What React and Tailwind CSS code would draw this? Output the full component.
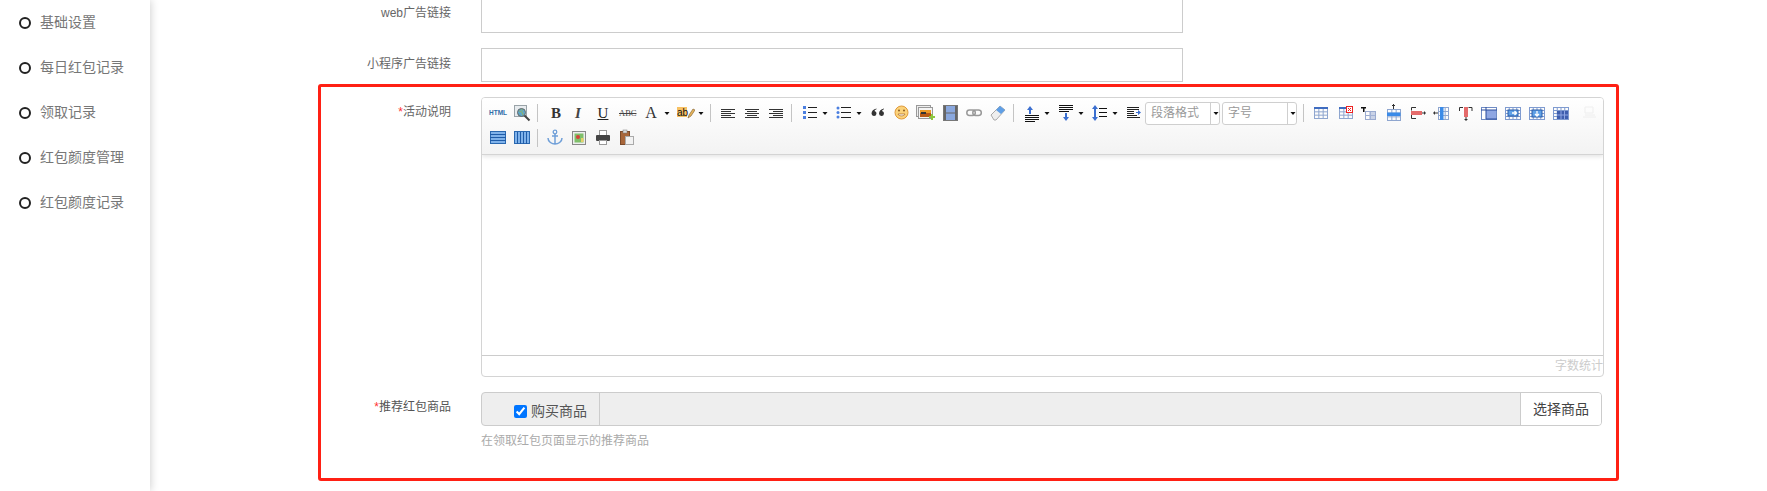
const FONT = "font-['Liberation_Sans','Noto_Sans_CJK_SC',sans-serif]";

function Ic({ w = 16, className = "", children }) {
  return (
    <svg width={w} height={18} viewBox={`0 0 ${w} 18`} className={"shrink-0 " + className}>
      {children}
    </svg>
  );
}

function Sep({ className = "" }) {
  return <div className={"w-px h-[18px] bg-[#c4c4c4] shrink-0 " + className} />;
}

function Caret({ className = "" }) {
  return (
    <svg width={6} height={18} viewBox="0 0 6 18" className={"shrink-0 " + className}>
      <path d="M0.5 8h5L3 11z" fill="#111" />
    </svg>
  );
}

function Lines({ x = 0, ys, ws, c = "#333" }) {
  return ys.map((y, i) => <rect key={i} x={x} y={y} width={ws[i % ws.length]} height={1} fill={c} />);
}

function Grid({ x, y, w, h, nx, ny, c = "#7f9bd0" }) {
  const v = [];
  for (let i = 1; i < nx; i++) v.push(<line key={"v" + i} x1={x + (w * i) / nx + 0.5} x2={x + (w * i) / nx + 0.5} y1={y} y2={y + h} stroke={c} />);
  for (let i = 1; i < ny; i++) v.push(<line key={"h" + i} y1={y + (h * i) / ny + 0.5} y2={y + (h * i) / ny + 0.5} x1={x} x2={x + w} stroke={c} />);
  return (
    <g>
      {v}
      <rect x={x + 0.5} y={y + 0.5} width={w} height={h} fill="none" stroke={c} />
    </g>
  );
}

function SelectBox({ label, className = "", w, line }) {
  return (
    <div className={"flex items-center h-[23px] border border-[#cfcfcf] rounded-[3px] bg-white shrink-0 " + w + " " + className}>
      <span className={"pl-[5px] text-[12px] text-[#999] " + line}>{label}</span>
      <div className="w-px h-full bg-[#cfcfcf]" />
      <Caret className="ml-[2px]" />
    </div>
  );
}

function Row1() {
  return (
    <div className="flex items-center h-[18px] pl-[7px]">
      <span className="w-[18px] text-[6.5px] leading-[18px] font-bold text-[#2f6ca8] shrink-0 font-['Liberation_Sans',sans-serif]">HTML</span>
      <Ic w={17} className="ml-[7px]">
        <rect x="0.5" y="1.5" width="12" height="11" fill="#e8ecef" stroke="#9aa3a8" />
        <circle cx="7.5" cy="8.5" r="4" fill="#5fa6c6" stroke="#666" />
        <path d="M5 7l3 1 1 3M7 5.5l2 1" stroke="#8db36a" fill="none" />
        <path d="M10.5 11.5l5 5" stroke="#444" strokeWidth="2" />
      </Ic>
      <Sep className="ml-[6px]" />
      <span className="w-[14px] ml-[11px] text-center text-[15px] leading-[18px] font-bold text-[#333] font-['Liberation_Serif',serif] shrink-0">B</span>
      <span className="w-[14px] ml-[8px] text-center text-[15px] leading-[18px] font-bold italic text-[#444] font-['Liberation_Serif',serif] shrink-0">I</span>
      <span className="w-[14px] ml-[11px] text-center text-[15px] leading-[18px] underline text-[#222] font-['Liberation_Serif',serif] shrink-0">U</span>
      <span className="w-[16px] ml-[9px] text-center text-[8.5px] leading-[18px] line-through text-[#444] font-['Liberation_Serif',serif] shrink-0">ABC</span>
      <span className="w-[14px] ml-[9px] text-center text-[16px] leading-[18px] text-[#333] font-['Liberation_Serif',serif] shrink-0">A</span>
      <Caret className="ml-[6px]" />
      <Ic w={18} className="ml-[7px]">
        <rect x="0" y="3" width="10" height="10" fill="#f7c163" />
        <text x="0" y="11.5" fontSize="10" fontFamily="Liberation Sans" fill="#111">ab</text>
        <path d="M11 14l1-3 4-6 2 1-4 6z" fill="#e6b45a" stroke="#8a6a3a" strokeWidth="0.7" />
      </Ic>
      <Caret className="ml-[3px]" />
      <Sep className="ml-[6px]" />
      <Ic w={15} className="ml-[10px]"><Lines ys={[5, 7, 9, 11, 13]} ws={[14, 10]} /></Ic>
      <Ic w={15} className="ml-[9px]"><Lines x={0} ys={[5, 9, 13]} ws={[14]} /><Lines x={2} ys={[7, 11]} ws={[10]} /></Ic>
      <Ic w={15} className="ml-[9px]"><Lines x={0} ys={[5, 9, 13]} ws={[14]} /><Lines x={4} ys={[7, 11]} ws={[10]} /></Ic>
      <Sep className="ml-[7px]" />
      <Ic w={15} className="ml-[10px]">
        <rect x="1" y="2" width="3" height="3" fill="#4b7fe0" /><rect x="1" y="7" width="3" height="3" fill="#4b7fe0" /><rect x="1" y="12" width="3" height="3" fill="#4b7fe0" />
        <Lines x={6} ys={[3, 8, 13]} ws={[9]} c="#222" />
      </Ic>
      <Caret className="ml-[5px]" />
      <Ic w={15} className="ml-[8px]">
        <circle cx="2" cy="4" r="1.5" fill="#4b7fe0" /><circle cx="2" cy="8.5" r="1.5" fill="#4b7fe0" /><circle cx="2" cy="13" r="1.5" fill="#4b7fe0" />
        <Lines x={5} ys={[3, 8, 13]} ws={[10]} c="#222" />
      </Ic>
      <Caret className="ml-[5px]" />
      <Ic w={15} className="ml-[8px]">
        <path d="M6.5 4.500c-3 .5-5 2.500-5 5a2.500 2.500 0 1 0 3-2.500c.2-1 1-1.500 2-1.800zM14 4.500c-3 .5-5 2.500-5 5a2.500 2.500 0 1 0 3-2.500c.2-1 1-1.500 2-1.800z" fill="#333" />
      </Ic>
      <Ic w={15} className="ml-[9px]">
        <circle cx="7.500" cy="8.500" r="6.500" fill="#fbd27a" stroke="#e09a3a" />
        <circle cx="5" cy="6.500" r="1" fill="#8a5a20" /><circle cx="10" cy="6.500" r="1" fill="#8a5a20" />
        <path d="M4 10h7c-.5 2.500-6.500 2.500-7 0z" fill="#fff" stroke="#a8641e" strokeWidth="0.7" />
      </Ic>
      <Ic w={19} className="ml-[7px]">
        <rect x="0.500" y="1.500" width="14" height="11" fill="#eee" stroke="#999" />
        <rect x="2.500" y="3.500" width="14" height="11" fill="#f4f4f4" stroke="#999" />
        <rect x="4" y="6" width="11" height="7" fill="#b85a14" />
        <rect x="4" y="6" width="11" height="3" fill="#ea9a28" />
        <rect x="5" y="8" width="5" height="2" fill="#333" />
        <path d="M15 10h2v2h2v2h-2v2h-2v-2h-2v-2h2z" fill="#8cc63f" />
      </Ic>
      <Ic w={15} className="ml-[8px]">
        <rect x="0.500" y="1.500" width="14" height="15" fill="#666" stroke="#777" />
        <rect x="3" y="2" width="9" height="6.500" fill="#8aa8de" />
        <rect x="3" y="9.500" width="9" height="6.500" fill="#8aa8de" />
      </Ic>
      <Ic w={16} className="ml-[8px]">
        <rect x="0.800" y="6" width="8.500" height="5.500" rx="2.700" fill="none" stroke="#999" strokeWidth="1.500" />
        <rect x="6.800" y="6" width="8.500" height="5.500" rx="2.700" fill="none" stroke="#999" strokeWidth="1.500" />
      </Ic>
      <Ic w={16} className="ml-[8px]">
        <path d="M1 11l9-9 5 4-9 10H4z" fill="#eee" stroke="#aaa" />
        <path d="M6 6l5 4 4-4-5-4z" fill="#5f9fe6" />
      </Ic>
      <Sep className="ml-[7px]" />
      <Ic w={15} className="ml-[11px]">
        <path d="M5 1l3 4H6v4H4V5H2z" transform="translate(0 1)" fill="#3b6fd0" />
        <Lines ys={[11, 13, 15, 17]} ws={[14, 14, 14, 10]} c="#111" />
      </Ic>
      <Caret className="ml-[4px]" />
      <Ic w={15} className="ml-[9px]">
        <Lines ys={[1, 3, 5, 7]} ws={[14, 14, 14, 10]} c="#111" />
        <path d="M6 9h2v4h2l-3 4-3-4h2z" fill="#3b6fd0" />
      </Ic>
      <Caret className="ml-[4px]" />
      <Ic w={15} className="ml-[8px]">
        <path d="M3 1l3 4H4v8h2l-3 4-3-4h2V5H0z" fill="#3b6fd0" />
        <Lines x={7} ys={[4, 8, 12]} ws={[8]} c="#111" />
      </Ic>
      <Caret className="ml-[5px]" />
      <Ic w={14} className="ml-[9px]">
        <Lines ys={[3, 5, 11, 13]} ws={[12, 12, 10, 13]} c="#222" />
        <Lines ys={[7, 9]} ws={[7]} c="#222" />
        <path d="M9 8h2V6l3 2.500-3 2.500V9H9z" fill="#3b6fd0" />
      </Ic>
      <SelectBox label="段落格式" w="w-[75px]" line="w-[65px]" className="ml-[4px]" />
      <SelectBox label="字号" w="w-[75px]" line="w-[65px]" className="ml-[2px]" />
      <Sep className="ml-[6px]" />
      <Ic w={14} className="ml-[10px]">
        <Grid x={0} y={4} w={13} h={10} nx={3} ny={3} c="#8fa6cf" />
        <rect x="0" y="3" width="14" height="2" fill="#3f6cc0" />
      </Ic>
      <Ic w={14} className="ml-[11px]">
        <Grid x={0} y={4} w={13} h={10} nx={3} ny={3} c="#8fa6cf" />
        <rect x="0" y="3" width="8" height="2" fill="#3f6cc0" />
        <rect x="7.500" y="2.500" width="6" height="6" fill="#fff" stroke="#e22" />
        <path d="M9 4l3 3M12 4l-3 3" stroke="#e22" />
      </Ic>
      <Ic w={15} className="ml-[8px]">
        <path d="M0 3h5v1.500H3.500V8H2V4.500H0z" fill="#111" />
        <Grid x={4} y={7} w={10} h={8} nx={2} ny={2} c="#9aabd0" />
        <rect x="8" y="8" width="6" height="7" fill="#a9b7d9" opacity=".6" />
      </Ic>
      <Ic w={14} className="ml-[11px]">
        <Grid x={0} y={5} w={13} h={11} nx={3} ny={3} c="#8fa6cf" />
        <rect x="0" y="8.500" width="13.500" height="3.500" fill="#3b8be8" />
        <path d="M6.500 0v5M5 1.500h3" stroke="#333" />
      </Ic>
      <Ic w={15} className="ml-[10px]">
        <path d="M5 3.500H0.500v3M0.500 11v3.500H5" fill="none" stroke="#333" />
        <rect x="0" y="7" width="11" height="4" fill="#e46a6a" />
        <path d="M11 9h4M13.500 7.500v3" stroke="#333" />
      </Ic>
      <Ic w={16} className="ml-[7px]">
        <Grid x={5} y={3} w={10} h={12} nx={3} ny={3} c="#8fa6cf" />
        <rect x="7" y="3" width="3.500" height="13" fill="#3b8be8" />
        <path d="M0 9h5M1.500 7.500v3" stroke="#333" />
      </Ic>
      <Ic w={14} className="ml-[10px]">
        <path d="M0.500 7V3.500h3.500M9.500 3.500H13V7" fill="none" stroke="#333" />
        <rect x="5" y="3" width="4" height="10" fill="#e46a6a" />
        <path d="M7 13v4M5.500 15.500h3" stroke="#333" />
      </Ic>
      <Ic w={16} className="ml-[8px]">
        <rect x="0.500" y="3.500" width="15" height="12" fill="#fff" stroke="#6f8bc4" />
        <rect x="5" y="6" width="10" height="9" fill="#8ea6e2" />
        <path d="M5 3v12h11M0 6h16" stroke="#2a4c9c" fill="none" />
      </Ic>
      <Ic w={16} className="ml-[8px]">
        <Grid x={0} y={3} w={15} h={12} nx={4} ny={4} c="#7f9bd0" />
        <rect x="3" y="6" width="10" height="6" fill="#5fa0e6" stroke="#2a5ca8" />
        <path d="M7 9h4M9.500 7l2 2-2 2" stroke="#fff" fill="none" strokeWidth="1.300" />
      </Ic>
      <Ic w={16} className="ml-[8px]">
        <Grid x={0} y={3} w={15} h={12} nx={4} ny={4} c="#7f9bd0" />
        <rect x="3" y="6" width="10" height="7" fill="#5fa0e6" stroke="#2a5ca8" />
        <path d="M8 7v5M6 10l2 2 2-2" stroke="#fff" fill="none" strokeWidth="1.300" />
      </Ic>
      <Ic w={16} className="ml-[8px]">
        <Grid x={0} y={3} w={15} h={12} nx={4} ny={4} c="#7f9bd0" />
        <rect x="4" y="7" width="11" height="8" fill="#3f5fae" />
        <path d="M4 11h11M8 7v8M11.500 7v8" stroke="#8ea6e2" />
      </Ic>
      <Ic w={14} className="ml-[14px] opacity-60">
        <path d="M2 3h8v6H2zM0 13h13M2 11h10" fill="none" stroke="#e8e8e8" />
      </Ic>
    </div>
  );
}

function Row2() {
  return (
    <div className="flex items-center h-[18px] mt-[7px] pl-[8px]">
      <Ic w={16}>
        <rect x="0.500" y="2.500" width="15" height="12" fill="#7fb2ea" stroke="#2a68b0" />
        <path d="M0 5.500h16M0 8.500h16M0 11.500h16" stroke="#1f5ca8" />
      </Ic>
      <Ic w={16} className="ml-[8px]">
        <rect x="0.500" y="2.500" width="15" height="12" fill="#7fb2ea" stroke="#2a68b0" />
        <path d="M3.500 3v12M6.500 3v12M9.500 3v12M12.500 3v12" stroke="#1f5ca8" />
      </Ic>
      <Sep className="ml-[7px]" />
      <Ic w={16} className="ml-[9px]">
        <circle cx="8" cy="3" r="1.800" fill="none" stroke="#6f9fd8" strokeWidth="1.300" />
        <path d="M8 5v10M5 7h6M1 9c0 4 4 6 7 6s7-2 7-6" fill="none" stroke="#6f9fd8" strokeWidth="1.500" />
      </Ic>
      <Ic w={14} className="ml-[9px]">
        <rect x="0.500" y="2.500" width="13" height="13" fill="#eee" stroke="#888" />
        <rect x="2.500" y="4.500" width="9" height="9" fill="#7fbf6a" />
        <circle cx="6" cy="8" r="2" fill="#d8423a" />
        <rect x="9" y="9" width="2.500" height="4" fill="#e6d06a" />
      </Ic>
      <Ic w={14} className="ml-[10px]">
        <rect x="3.500" y="1.500" width="7" height="5" fill="#fff" stroke="#999" />
        <rect x="0" y="6" width="14" height="6" rx="1" fill="#444" />
        <rect x="3.500" y="11.500" width="7" height="4" fill="#fff" stroke="#999" />
      </Ic>
      <Ic w={14} className="ml-[10px]">
        <rect x="0.500" y="2.500" width="9" height="13" fill="#a8663a" stroke="#7a4a2a" />
        <rect x="3" y="1" width="4" height="3" fill="#ddd" stroke="#777" strokeWidth="0.500" />
        <rect x="5.500" y="7.500" width="8" height="8" fill="#f2f2f2" stroke="#aaa" />
      </Ic>
    </div>
  );
}

export default function App() {
  return (
    <div className={"flex w-[1767px] h-[491px] overflow-hidden bg-white " + FONT}>
      <aside className="w-[150px] h-full shrink-0 bg-white shadow-[1px_0_8px_rgba(0,0,0,0.18)]">
        {["基础设置", "每日红包记录", "领取记录", "红包颜度管理", "红包颜度记录"].map((t) => (
          <div key={t} className="flex items-center h-[45px] pl-[19px] gap-[9px]">
            <span className="w-[12px] h-[12px] rounded-full border-2 border-[#222]" />
            <span className="text-[14px] text-[#777]">{t}</span>
          </div>
        ))}
      </aside>
      <main className="flex-1 pl-[168px]">
        <div className="flex gap-[30px]">
          <label className="w-[133px] text-right text-[12px] leading-[26px] text-[#666]">web广告链接</label>
          <div className="w-[702px] h-[33px] border border-[#ccc] border-t-0" />
        </div>
        <div className="flex gap-[30px] mt-[15px]">
          <label className="w-[133px] text-right text-[12px] leading-[30px] pt-[1px] text-[#666]">小程序广告链接</label>
          <div className="w-[702px] h-[34px] border border-[#ccc]" />
        </div>
        <section className="mt-[2px] w-[1301px] h-[397px] border-[3px] border-[#ff2014] rounded-[3px] pt-[10px]">
          <div className="flex gap-[30px]">
            <label className="w-[130px] text-right text-[12px] leading-[18px] pt-[6px] text-[#666]">
              <span className="text-[#f33]">*</span>活动说明
            </label>
            <div className="w-[1123px] h-[280px] flex flex-col border border-[#d4d4d4] rounded-[4px] overflow-hidden">
              <div className="h-[57px] pt-[6px] bg-gradient-to-b from-white to-[#f3f3f3] border-b border-[#d4d4d4] shadow-[0_2px_4px_rgba(0,0,0,0.1)]">
                <Row1 />
                <Row2 />
              </div>
              <div className="flex-1" />
              <div className="h-[21px] border-t border-[#ccc] text-right text-[12px] leading-[21px] text-[#ccc]">字数统计</div>
            </div>
          </div>
          <div className="flex gap-[30px] mt-[15px]">
            <label className="w-[130px] text-right text-[12px] leading-[18px] pt-[6px] text-[#555]">
              <span className="text-[#f33]">*</span>推荐红包商品
            </label>
            <div className="w-[1121px]">
              <div className="flex h-[34px] border border-[#ccc] rounded-[4px] overflow-hidden bg-[#eee]">
                <div className="w-[118px] border-r border-[#ccc] pl-[32px] pt-[5px] flex items-center gap-[4px] text-[14px] text-[#555]">
                  <input type="checkbox" defaultChecked className="m-0 w-[13px] h-[13px]" />
                  <span>购买商品</span>
                </div>
                <div className="flex-1" />
                <div className="w-[81px] bg-white border-l border-[#ccc] flex items-center justify-center text-[14px] text-[#444]">选择商品</div>
              </div>
              <p className="mt-[6px] text-[12px] leading-[18px] text-[#aaa]">在领取红包页面显示的推荐商品</p>
            </div>
          </div>
        </section>
      </main>
    </div>
  );
}
